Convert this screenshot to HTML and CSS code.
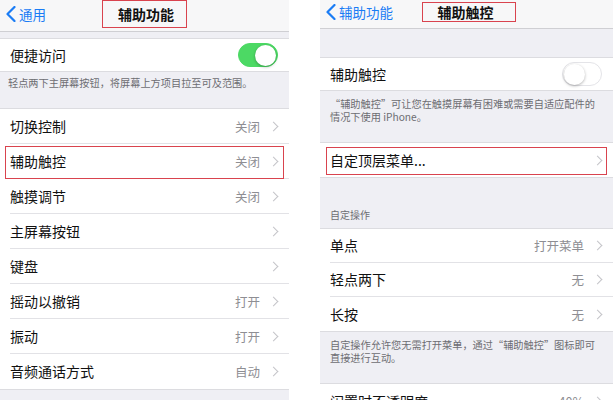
FILE: index.html
```html
<!DOCTYPE html>
<html lang="zh-CN">
<head>
  <meta charset="UTF-8" />
  <meta name="viewport" content="width=device-width, initial-scale=1.0" />
  <title>辅助功能</title>
  <link rel="stylesheet" href="styles.css">
</head>
<body>
  <div class="screens">

    <!-- 左：辅助功能 -->
    <section class="screen screen-left">
      <header class="nav">
        <a class="back">
          <svg class="back-icon" viewBox="0 0 10 16" width="10" height="16"><polyline points="8.5,1 1.5,8 8.5,15" /></svg>
          通用
        </a>
        <h1 class="title">辅助功能</h1>
      </header>

      <div class="gap gap-top"></div>

      <ul class="group">
        <li class="row row-short">
          <div class="cell">
            <span class="label">便捷访问</span>
            <span class="toggle on"><i></i></span>
          </div>
        </li>
      </ul>

      <p class="note note-one">轻点两下主屏幕按钮，将屏幕上方项目拉至可及范围。</p>

      <ul class="group">
        <li class="row"><div class="cell"><span class="label">切换控制</span><span class="value">关闭</span><span class="chev"></span></div></li>
        <li class="row marked"><div class="cell"><span class="label">辅助触控</span><span class="value">关闭</span><span class="chev"></span></div></li>
        <li class="row"><div class="cell"><span class="label">触摸调节</span><span class="value">关闭</span><span class="chev"></span></div></li>
        <li class="row"><div class="cell"><span class="label">主屏幕按钮</span><span class="chev"></span></div></li>
        <li class="row"><div class="cell"><span class="label">键盘</span><span class="chev"></span></div></li>
        <li class="row"><div class="cell"><span class="label">摇动以撤销</span><span class="value">打开</span><span class="chev"></span></div></li>
        <li class="row"><div class="cell"><span class="label">振动</span><span class="value">打开</span><span class="chev"></span></div></li>
        <li class="row"><div class="cell"><span class="label">音频通话方式</span><span class="value">自动</span><span class="chev"></span></div></li>
      </ul>
    </section>

    <!-- 右：辅助触控 -->
    <section class="screen screen-right">
      <header class="nav">
        <a class="back">
          <svg class="back-icon" viewBox="0 0 10 16" width="10" height="16"><polyline points="8.5,1 1.5,8 8.5,15" /></svg>
          辅助功能
        </a>
        <h1 class="title">辅助触控</h1>
      </header>

      <div class="gap gap-tall"></div>

      <ul class="group">
        <li class="row row-short">
          <div class="cell">
            <span class="label">辅助触控</span>
            <span class="toggle"><i></i></span>
          </div>
        </li>
      </ul>

      <p class="note">“辅助触控”可让您在触摸屏幕有困难或需要自适应配件的情况下使用 iPhone。</p>

      <ul class="group">
        <li class="row row-menu marked"><div class="cell"><span class="label">自定顶层菜单...</span><span class="chev"></span></div></li>
      </ul>

      <p class="section-head">自定操作</p>

      <ul class="group">
        <li class="row row-mid"><div class="cell"><span class="label">单点</span><span class="value">打开菜单</span><span class="chev"></span></div></li>
        <li class="row row-mid"><div class="cell"><span class="label">轻点两下</span><span class="value">无</span><span class="chev"></span></div></li>
        <li class="row row-mid"><div class="cell"><span class="label">长按</span><span class="value">无</span><span class="chev"></span></div></li>
      </ul>

      <p class="note">自定操作允许您无需打开菜单，通过“辅助触控”图标即可直接进行互动。</p>

      <ul class="group">
        <li class="row"><div class="cell"><span class="label">闲置时不透明度</span><span class="value">40%</span><span class="chev"></span></div></li>
      </ul>
    </section>

  </div>
</body>
</html>
```

FILE: styles.css
```css
* {
  box-sizing: border-box;
}

body {
  margin: 0;
  background: #fff;
  font-family: "Noto Sans CJK SC", "Noto Sans", sans-serif;
  color: #111;
  overflow: hidden;
}

.screens {
  display: flex;
  gap: 31px;
  height: 400px;
}

.screen {
  background: #efeff4;
  height: 400px;
  overflow: hidden;
}

.screen-left {
  width: 289px;
}

.screen-right {
  width: 293px;
}

/* nav bar */
.nav {
  display: grid;
  grid-template-columns: 1fr auto 1fr;
  background: #f7f7f8;
  border-bottom: 1px solid #cfcfd3;
}

.screen-left .nav {
  height: 32px;
}

.screen-right .nav {
  height: 29px;
}

.back {
  display: flex;
  align-items: center;
  gap: 3px;
  color: #1a7cf5;
  font-size: 13.5px;
}

.screen-left .back {
  padding: 0 0 3px 6px;
}

.screen-right .back {
  padding: 0 0 5px 6px;
}

.back-icon {
  fill: none;
  stroke: #1a7cf5;
  stroke-width: 2.2;
  stroke-linecap: round;
  stroke-linejoin: round;
}

.title {
  margin: 0;
  font-size: 14px;
  font-weight: bold;
  line-height: 1;
  color: #111;
  border: 1.5px solid #d9434e;
  display: flex;
  align-items: center;
  align-self: start;
}

.screen-left .title {
  height: 28px;
  padding: 0 12px 0 15px;
}

.screen-right .title {
  height: 20px;
  margin-top: 2px;
  margin-left: 4px;
  padding: 0 21px 0 15px;
}

/* grey spacers */
.gap-top {
  height: 6px;
}

.gap-tall {
  height: 28px;
}

/* grouped list */
.group {
  list-style: none;
  margin: 0;
  padding: 0;
  background: #fff;
  border-top: 1px solid #dcdce0;
  border-bottom: 1px solid #dcdce0;
}

.row {
  position: relative;
  padding-left: 10px;
}

.cell {
  display: flex;
  align-items: center;
  height: 35px;
  padding-right: 11px;
  border-bottom: 1px solid #e2e2e6;
}

.row:last-child .cell {
  border-bottom: none;
}

.row-short .cell {
  height: 32px;
}

.row-menu .cell {
  height: 34px;
}

.row-mid .cell {
  height: 34px;
}

.label {
  flex: 1;
  font-size: 14px;
  padding-bottom: 1px;
}

.value {
  font-size: 12.5px;
  color: #8e8e93;
  margin-right: 10px;
}

.chev {
  width: 7px;
  height: 7px;
  border-right: 1.3px solid #c4c4c9;
  border-bottom: 1.3px solid #c4c4c9;
  transform: rotate(-45deg);
  margin-right: 1px;
}

/* red annotation frame */
.marked::after {
  content: "";
  position: absolute;
  border: 1.5px solid #d9434e;
  pointer-events: none;
}

.screen-left .marked::after {
  top: 2px;
  bottom: 0;
  left: 5px;
  right: 5px;
}

.screen-right .marked::after {
  top: 4px;
  bottom: 2px;
  left: 6px;
  right: 6px;
}

/* switches */
.toggle {
  width: 40px;
  height: 24px;
  border-radius: 12px;
  background: #fff;
  border: 1.5px solid #e4e4e8;
  display: flex;
  align-items: center;
  padding: 0 1px;
}

.toggle i {
  width: 21px;
  height: 21px;
  border-radius: 50%;
  background: #fff;
  box-shadow: 0 1px 3px rgba(0, 0, 0, 0.3);
}

.toggle.on {
  background: #4cd964;
  border-color: #4cd964;
  justify-content: flex-end;
}

/* footnotes */
.note {
  margin: 0;
  font-size: 10.2px;
  line-height: 13px;
  color: #6d6d72;
  padding: 6px 10px 0 10px;
  height: 51px;
}

.note-one {
  height: 36px;
  padding-top: 4px;
  padding-left: 8px;
}

.section-head {
  margin: 0;
  height: 50px;
  padding: 30px 10px 0;
  font-size: 10px;
  line-height: 13px;
  color: #6d6d72;
}
```
